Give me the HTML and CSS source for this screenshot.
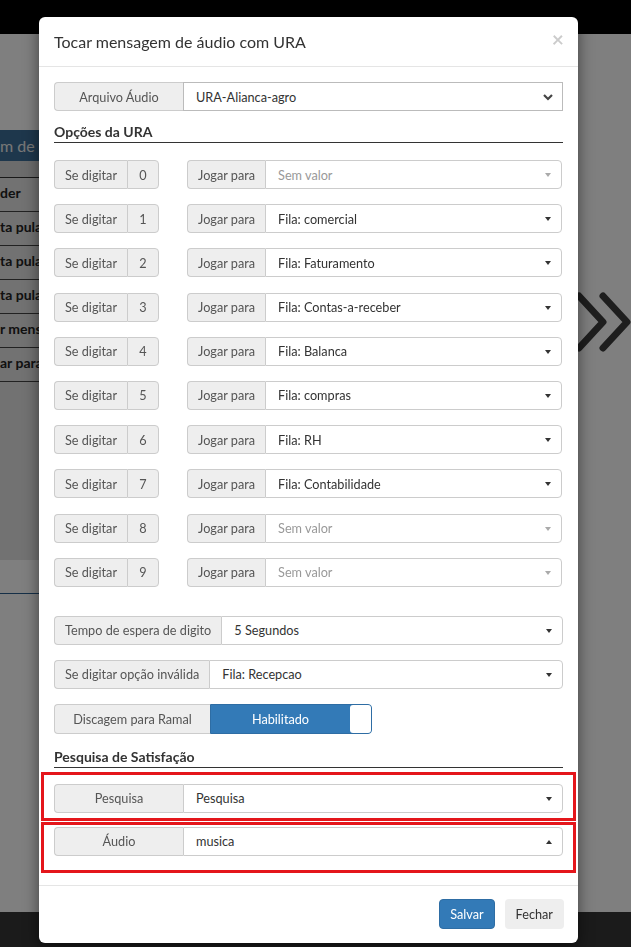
FILE: index.html
```html
<!DOCTYPE html>
<html lang="pt-BR">
<head>
    <meta charset="UTF-8">
    <meta name="viewport" content="width=device-width, initial-scale=1.0">
    <title>Tocar mensagem de áudio com URA</title>
    <link rel="stylesheet" href="styles.css">
</head>
<body>
    <div class="page">
        <div class="topbar"></div>
        <div class="content">
            <div class="panel">
                <div class="panel-head">m de D</div>
                <div class="panel-strip"></div>
                <div class="panel-row">der</div>
                <div class="panel-row">ta pular</div>
                <div class="panel-row">ta pular</div>
                <div class="panel-row">ta pular</div>
                <div class="panel-row">r mensa</div>
                <div class="panel-row">ar para</div>
                <div class="panel-fill"></div>
                <div class="panel-foot"></div>
            </div>
            <div class="chevrons">
                <svg width="60" height="64" viewBox="0 0 60 64">
                    <polyline points="4,6 28,32 4,58" fill="none" stroke="#3c3c3c" stroke-width="7" stroke-linecap="round" stroke-linejoin="round"/>
                    <polyline points="28,6 52,32 28,58" fill="none" stroke="#3c3c3c" stroke-width="7" stroke-linecap="round" stroke-linejoin="round"/>
                </svg>
            </div>
        </div>
        <div class="bottombar"></div>
    </div>

    <div class="backdrop"></div>

    <div class="modal">
        <div class="modal-header">
            <h4 class="modal-title">Tocar mensagem de áudio com URA</h4>
            <span class="close">&times;</span>
        </div>

        <div class="modal-body">
            <div class="input-group">
                <span class="addon addon-file">Arquivo Áudio</span>
                <div class="native-select">
                    URA-Alianca-agro
                    <svg class="native-arrow" width="12" height="8" viewBox="0 0 12 8"><polyline points="2,2 6,6 10,2" fill="none" stroke="#444" stroke-width="2.2"/></svg>
                </div>
            </div>

            <h5 class="legend">Opções da URA</h5>

            <div class="ura-row">
                <div class="input-group">
                    <span class="addon addon-digit-label">Se digitar</span>
                    <span class="addon addon-digit">0</span>
                </div>
                <div class="input-group">
                    <span class="addon">Jogar para</span>
                    <div class="select empty">Sem valor<span class="caret"></span></div>
                </div>
            </div>
            <div class="ura-row">
                <div class="input-group">
                    <span class="addon addon-digit-label">Se digitar</span>
                    <span class="addon addon-digit">1</span>
                </div>
                <div class="input-group">
                    <span class="addon">Jogar para</span>
                    <div class="select">Fila: comercial<span class="caret"></span></div>
                </div>
            </div>
            <div class="ura-row">
                <div class="input-group">
                    <span class="addon addon-digit-label">Se digitar</span>
                    <span class="addon addon-digit">2</span>
                </div>
                <div class="input-group">
                    <span class="addon">Jogar para</span>
                    <div class="select">Fila: Faturamento<span class="caret"></span></div>
                </div>
            </div>
            <div class="ura-row">
                <div class="input-group">
                    <span class="addon addon-digit-label">Se digitar</span>
                    <span class="addon addon-digit">3</span>
                </div>
                <div class="input-group">
                    <span class="addon">Jogar para</span>
                    <div class="select">Fila: Contas-a-receber<span class="caret"></span></div>
                </div>
            </div>
            <div class="ura-row">
                <div class="input-group">
                    <span class="addon addon-digit-label">Se digitar</span>
                    <span class="addon addon-digit">4</span>
                </div>
                <div class="input-group">
                    <span class="addon">Jogar para</span>
                    <div class="select">Fila: Balanca<span class="caret"></span></div>
                </div>
            </div>
            <div class="ura-row">
                <div class="input-group">
                    <span class="addon addon-digit-label">Se digitar</span>
                    <span class="addon addon-digit">5</span>
                </div>
                <div class="input-group">
                    <span class="addon">Jogar para</span>
                    <div class="select">Fila: compras<span class="caret"></span></div>
                </div>
            </div>
            <div class="ura-row">
                <div class="input-group">
                    <span class="addon addon-digit-label">Se digitar</span>
                    <span class="addon addon-digit">6</span>
                </div>
                <div class="input-group">
                    <span class="addon">Jogar para</span>
                    <div class="select">Fila: RH<span class="caret"></span></div>
                </div>
            </div>
            <div class="ura-row">
                <div class="input-group">
                    <span class="addon addon-digit-label">Se digitar</span>
                    <span class="addon addon-digit">7</span>
                </div>
                <div class="input-group">
                    <span class="addon">Jogar para</span>
                    <div class="select">Fila: Contabilidade<span class="caret"></span></div>
                </div>
            </div>
            <div class="ura-row">
                <div class="input-group">
                    <span class="addon addon-digit-label">Se digitar</span>
                    <span class="addon addon-digit">8</span>
                </div>
                <div class="input-group">
                    <span class="addon">Jogar para</span>
                    <div class="select empty">Sem valor<span class="caret"></span></div>
                </div>
            </div>
            <div class="ura-row">
                <div class="input-group">
                    <span class="addon addon-digit-label">Se digitar</span>
                    <span class="addon addon-digit">9</span>
                </div>
                <div class="input-group">
                    <span class="addon">Jogar para</span>
                    <div class="select empty">Sem valor<span class="caret"></span></div>
                </div>
            </div>

            <div class="options">
                <div class="input-group">
                    <span class="addon">Tempo de espera de digito</span>
                    <div class="select">5 Segundos<span class="caret"></span></div>
                </div>
                <div class="input-group">
                    <span class="addon">Se digitar opção inválida</span>
                    <div class="select">Fila: Recepcao<span class="caret"></span></div>
                </div>
                <div class="input-group">
                    <span class="addon addon-ramal">Discagem para Ramal</span>
                    <div class="toggle">
                        <span class="toggle-on">Habilitado</span>
                        <span class="toggle-handle"></span>
                    </div>
                </div>
            </div>

            <h5 class="legend legend-survey">Pesquisa de Satisfação</h5>

            <div class="highlight highlight-first">
                <div class="input-group">
                    <span class="addon addon-file">Pesquisa</span>
                    <div class="select">Pesquisa<span class="caret"></span></div>
                </div>
            </div>
            <div class="highlight highlight-second">
                <div class="input-group">
                    <span class="addon addon-file">Áudio</span>
                    <div class="select">musica<span class="caret caret-up"></span></div>
                </div>
            </div>
        </div>

        <div class="modal-footer">
            <button class="btn btn-primary">Salvar</button>
            <button class="btn btn-default">Fechar</button>
        </div>
    </div>
</body>
</html>
```

FILE: styles.css
```css
* {
    margin: 0;
    padding: 0;
    box-sizing: border-box;
}

body {
    font-family: Lato, 'Open Sans', sans-serif;
    font-size: 12.7px;
    color: #333;
    background: #fff;
    width: 631px;
    height: 947px;
    overflow: hidden;
}

/* pagina por tras do modal */
.page {
    height: 947px;
    display: flex;
    flex-direction: column;
}

.topbar {
    height: 34px;
    background: #000;
}

.content {
    flex: 1;
    display: flex;
    background: #fff;
}

.panel {
    width: 39px;
    margin-top: 96px;
    display: flex;
    flex-direction: column;
    overflow: hidden;
    white-space: nowrap;
}

.panel-head {
    height: 31px;
    background: #3d6f99;
    color: #eee;
    font-size: 16px;
    line-height: 31px;
}

.panel-strip {
    height: 17px;
    background: #d8d8d8;
    border-bottom: 1px solid #333;
}

.panel-row {
    height: 34px;
    line-height: 30px;
    font-weight: bold;
    font-size: 14px;
    color: #222;
    background: #e4e4e4;
    border-bottom: 1px solid #444;
}

.panel-fill {
    height: 178px;
    background: #e4e4e4;
}

.panel-foot {
    height: 34px;
    border-bottom: 1px solid #2a5f8f;
}

.chevrons {
    margin-left: auto;
    margin-top: 256px;
    margin-right: -4px;
}

.bottombar {
    height: 35px;
    background: #363636;
}

.backdrop {
    position: fixed;
    inset: 0;
    background: rgba(0, 0, 0, 0.5);
}

/* modal */
.modal {
    position: absolute;
    left: 39px;
    top: 17px;
    width: 539px;
    background: #fff;
    border-radius: 6px;
    box-shadow: 0 5px 15px rgba(0, 0, 0, 0.5);
}

.modal-header {
    position: relative;
    padding: 15px;
    border-bottom: 1px solid #e5e5e5;
}

.modal-title {
    font-size: 16px;
    font-weight: normal;
    line-height: 19px;
    color: #333;
}

.close {
    position: absolute;
    right: 14px;
    top: 11px;
    font-size: 21px;
    font-weight: bold;
    color: #000;
    opacity: 0.2;
    line-height: 21px;
}

.modal-body {
    padding: 15px 15px 12px;
}

.input-group {
    display: flex;
    height: 29px;
}

.addon {
    display: flex;
    align-items: center;
    justify-content: center;
    padding: 0 10px;
    background: #eee;
    border: 1px solid #ccc;
    border-right: none;
    color: #555;
    white-space: nowrap;
    border-radius: 4px 0 0 4px;
}

.addon-file {
    width: 129px;
}

.addon-digit-label {
    width: 73px;
}

.addon-digit {
    width: 32px;
    padding: 0;
    border-right: 1px solid #ccc;
    border-radius: 0 4px 4px 0;
}

.addon-ramal {
    width: 156px;
}

.native-select,
.select {
    flex: 1;
    position: relative;
    display: flex;
    align-items: center;
    padding-left: 12px;
    background: #fff;
    border: 1px solid #ccc;
    border-radius: 0 4px 4px 0;
    color: #333;
}

.native-select {
    border-color: #bbb;
    border-radius: 0;
}

.native-arrow {
    position: absolute;
    right: 8px;
    top: 10px;
}

.select.empty {
    color: #999;
}

.caret {
    position: absolute;
    right: 10px;
    top: 12px;
    border-top: 4px solid #333;
    border-left: 3.5px solid transparent;
    border-right: 3.5px solid transparent;
}

.select.empty .caret {
    border-top-color: #aaa;
}

.caret-up {
    border-top: none;
    border-bottom: 4px solid #333;
}

.legend {
    margin-top: 13px;
    padding-bottom: 2px;
    font-size: 14px;
    font-weight: bold;
    line-height: 16px;
    color: #333;
    border-bottom: 1px solid #333;
    margin-bottom: 17px;
}

.ura-row {
    display: flex;
    margin-bottom: 15.2px;
}

.ura-row .input-group:first-child {
    width: 133px;
}

.ura-row .input-group:last-child {
    flex: 1;
    margin-right: 1px;
}

.options {
    margin-top: 29px;
    display: flex;
    flex-direction: column;
    gap: 15px;
}

.options .input-group:last-child {
    height: 30px;
}

.toggle {
    width: 162px;
    display: flex;
    background: #337ab7;
    border: 1px solid #2e6da4;
    border-radius: 0 4px 4px 0;
}

.toggle-on {
    flex: 1;
    display: flex;
    align-items: center;
    justify-content: center;
    color: #fff;
}

.toggle-handle {
    width: 21px;
    background: #fff;
    border-radius: 3px;
}

.legend-survey {
    margin-top: 15px;
    margin-bottom: 4px;
}

.highlight {
    margin: 0 -13px;
    padding: 9px 10px 5px;
    border: 3px solid #e4161b;
}

.highlight-second {
    margin-top: 1px;
    padding: 2px 10px 14px;
}

.modal-footer {
    display: flex;
    justify-content: flex-end;
    gap: 10px;
    padding: 13px 14px 14px;
    border-top: 1px solid #e5e5e5;
}

.btn {
    height: 30px;
    padding: 0 10px;
    font-family: Lato, 'Open Sans', sans-serif;
    font-size: 12.7px;
    border-radius: 4px;
    border: 1px solid transparent;
}

.btn-primary {
    background: #337ab7;
    border-color: #2e6da4;
    color: #fff;
}

.btn-default {
    background: #eee;
    color: #333;
}
```
